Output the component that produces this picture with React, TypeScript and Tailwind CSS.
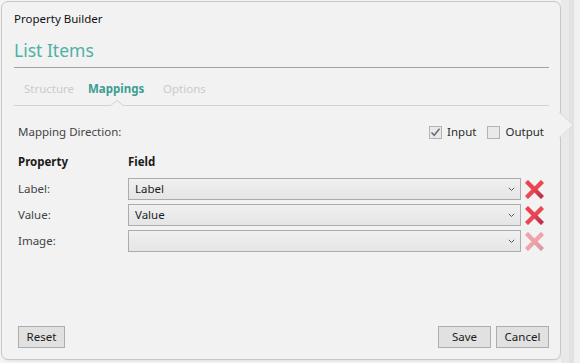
import React from 'react';

const font = "font-['Segoe_UI','Noto_Sans','Open_Sans',sans-serif]";

function RemoveIcon({ faded }: { faded?: boolean }) {
  return (
    <svg width="19" height="19" viewBox="0 0 19 19" className={faded ? 'opacity-45' : ''}>
      <defs>
        <linearGradient id={faded ? 'xg2' : 'xg1'} x1="0" y1="0" x2="1" y2="1">
          <stop offset="0.45" stopColor="#ea4450" />
          <stop offset="1" stopColor="#c22f49" />
        </linearGradient>
      </defs>
      <line x1="16" y1="3" x2="3" y2="16" stroke="#ea4853" strokeWidth="4.4" strokeLinecap="square" />
      <line x1="3" y1="3" x2="16" y2="16" stroke={`url(#${faded ? 'xg2' : 'xg1'})`} strokeWidth="4.4" strokeLinecap="square" />
    </svg>
  );
}

function Checkbox({ checked, label }: { checked?: boolean; label: string }) {
  return (
    <label className="flex items-center gap-[5px]">
      <span className="w-[13px] h-[13px] border border-[#b3b3b3] bg-[#e9e9e9] flex items-center justify-center">
        {checked && (
          <svg width="11" height="11" viewBox="0 0 11 11">
            <path d="M1.5 5.5 L4.2 8.3 L9.5 1.8" fill="none" stroke="#6f6f6f" strokeWidth="1.6" />
          </svg>
        )}
      </span>
      <span className="text-[11.5px] leading-[16px] text-[#2b2b2b]">{label}</span>
    </label>
  );
}

function FieldSelect({ value }: { value: string }) {
  return (
    <div className="w-[393px] h-[22px] border border-[#acacac] bg-gradient-to-b from-[#f0f0f0] to-[#e5e5e5] flex items-center pl-[6px] pr-[5px]">
      <span className="flex-1 text-[11.5px] leading-[16px] text-[#1e1e1e]">{value}</span>
      <svg width="7" height="5" viewBox="0 0 7 5">
        <path d="M0.8 0.8 L3.5 3.5 L6.2 0.8" fill="none" stroke="#5a5a5a" strokeWidth="1" />
      </svg>
    </div>
  );
}

const rows = [
  { property: 'Label:', field: 'Label', faded: false },
  { property: 'Value:', field: 'Value', faded: false },
  { property: 'Image:', field: '', faded: true },
];

function Button({ children, width }: { children: React.ReactNode; width: string }) {
  return (
    <button
      type="button"
      className={`${width} h-[22px] border border-[#adadad] bg-[#e1e1e1] text-[11.5px] leading-[16px] text-[#1b1b1b] flex items-center justify-center`}
    >
      {children}
    </button>
  );
}

export default function App() {
  return (
    <div className={`w-[580px] h-[363px] bg-[#f4f4f4] flex overflow-hidden relative ${font}`}>
      {/* 弹出面板 */}
      <div className="mt-[1px] ml-[1px] w-[560px] h-[359px] shrink-0 rounded-[7px] border border-[#c8c8c8] bg-[#f2f2f2] flex flex-col pl-[12px] pr-[11px] shadow-[1px_1px_3px_rgba(0,0,0,0.08)]">
        <div className="mt-[9px] text-[11.5px] leading-[16px] text-[#111]">Property Builder</div>
        <div className="mt-[11px] text-[17.5px] leading-[24px] text-[#4fb0a6]">List Items</div>
        <div className="mt-[5px] border-t border-[#a3a3a3]" />

        {/* 标签页 */}
        <div className="mt-[13px] flex text-[11.5px] leading-[16px] pl-[10px]">
          <div className="w-[64px] text-[#cbcbcb]">Structure</div>
          <div className="w-[75px] font-bold text-[#3c9d93]">Mappings</div>
          <div className="text-[#cbcbcb]">Options</div>
        </div>
        <div className="mt-[8px] relative border-t border-[#d2d2d2]">
          <svg width="14" height="6" viewBox="0 0 14 6" className="absolute left-[96px] -top-[6px]">
            <path d="M0 6 L7 0.5 L14 6" fill="#f2f2f2" stroke="#d2d2d2" strokeWidth="1" />
          </svg>
        </div>

        {/* 映射 */}
        <div className="pl-[4px] pr-[5px] flex flex-col">
          <div className="mt-[18px] flex items-center justify-between">
            <span className="text-[11.5px] leading-[16px] text-[#444]">Mapping Direction:</span>
            <div className="flex items-center gap-[11px]">
              <Checkbox checked label="Input" />
              <Checkbox label="Output" />
            </div>
          </div>

          <div className="mt-[14px] flex text-[11.5px] leading-[16px] font-bold text-[#1a1a1a]">
            <div className="w-[110px]">Property</div>
            <div>Field</div>
          </div>

          <div className="mt-[8px] flex flex-col gap-[4px]">
            {rows.map((row) => (
              <div key={row.property} className="flex items-center">
                <div className="w-[110px] text-[11.5px] leading-[16px] text-[#444]">{row.property}</div>
                <FieldSelect value={row.field} />
                <div className="ml-[4px]">
                  <RemoveIcon faded={row.faded} />
                </div>
              </div>
            ))}
          </div>
        </div>

        {/* 底部按钮 */}
        <div className="mt-auto mb-[11px] pl-[4px] flex items-center">
          <Button width="w-[47px]">Reset</Button>
          <div className="ml-auto flex gap-[5px]">
            <Button width="w-[53px]">Save</Button>
            <Button width="w-[53px]">Cancel</Button>
          </div>
        </div>
      </div>

      {/* 右侧背景 */}
      <div className="w-[8px] bg-[#e9e9e9]" />
      <div className="w-[5px] bg-[#e2e2e2]" />
      <div className="flex-1 bg-[#f0f0f0]" />

      {/* 指向箭头 */}
      <svg width="15" height="26" viewBox="0 0 15 26" className="absolute left-[559px] top-[112px]">
        <path d="M0 0 L14 13 L0 26 Z" fill="#f2f2f2" />
        <path d="M0 0 L14 13 L0 26" fill="none" stroke="#dcdcdc" strokeWidth="1" />
      </svg>
    </div>
  );
}
